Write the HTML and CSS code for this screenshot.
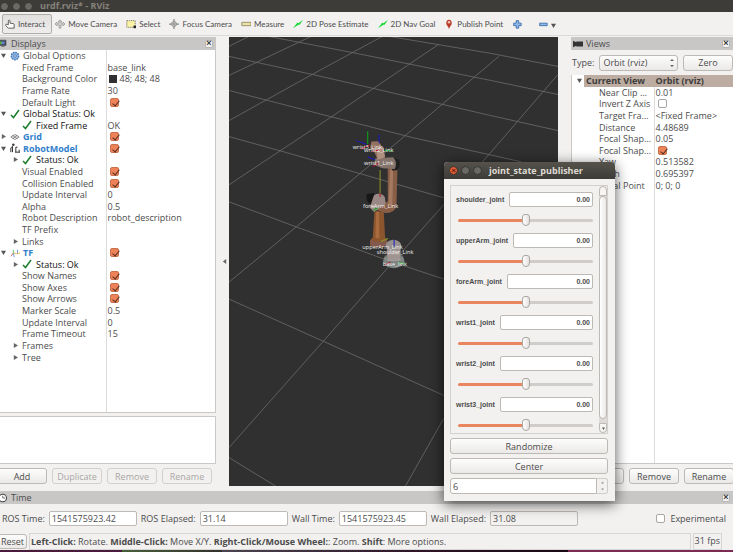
FILE: index.html
```html
<!DOCTYPE html>
<html lang="en">
<head>
<meta charset="utf-8">
<title>urdf.rviz* - RViz</title>
<link rel="stylesheet" href="styles.css">
</head>
<body>
<svg class="defs" aria-hidden="true">
  <symbol id="down" viewBox="0 0 6 6"><path d="M0 1h6L3 6z" fill="#555"/></symbol>
  <symbol id="right" viewBox="0 0 6 6"><path d="M1 0l5 3-5 3z" fill="#666"/></symbol>
  <symbol id="ok" viewBox="0 0 10 10"><path d="M1 6l2.500 2.500L9 1" fill="none" stroke="#1d7d2c" stroke-width="1.500"/></symbol>
  <symbol id="move" viewBox="0 0 12 12"><path d="M6 1l2 2H7v2h3V4l2 2-2 2V7H7v4H5V7H2v1L0 6l2-2v1h3V3H4z" fill="#ddd" stroke="#777" stroke-width=".7"/></symbol>
  <symbol id="target" viewBox="0 0 12 12"><path d="M6 0v12M0 6h12" stroke="#888" stroke-width="1.500"/><circle cx="6" cy="6" r="3" fill="#ccc" stroke="#888"/><path d="M6 4v4M4 6h4" stroke="#888"/></symbol>
  <symbol id="arrow2d" viewBox="0 0 12 10"><path d="M0 10L5 3.500 6.500 4 12 0 8 6 6.500 6z" fill="#18d834"/></symbol>
</svg>

<header class="titlebar">
  <span class="dots"><i></i><i></i><i></i></span>
  <h1>urdf.rviz* - RViz</h1>
</header>

<nav class="toolbar">
  <button class="tool active"><svg viewBox="0 0 12 12"><path d="M4 7V2q1-1.500 2 0v3l4 .5q1 .3 1 1.500V11H4L1 8V6.500q1-1 3 .5z" fill="#fff" stroke="#444"/></svg>Interact</button>
  <button class="tool"><svg><use href="#move"/></svg>Move Camera</button>
  <button class="tool"><svg viewBox="0 0 12 10"><path d="M1 1h10v8H1z" fill="#fbf3a6" stroke="#665" stroke-dasharray="1.500 1"/><path d="M9 7h3v3H9z" fill="#222"/></svg>Select</button>
  <button class="tool"><svg><use href="#target"/></svg>Focus Camera</button>
  <button class="tool"><svg viewBox="0 0 12 12"><path d="M1 4h11v4H1z" fill="#eee2a0" stroke="#8a8460"/></svg>Measure</button>
  <button class="tool"><svg><use href="#arrow2d"/></svg>2D Pose Estimate</button>
  <button class="tool"><svg><use href="#arrow2d"/></svg>2D Nav Goal</button>
  <button class="tool"><svg viewBox="0 0 12 12"><path d="M6 12Q5 9 3 6.500C1-1 11-1 9 6.500Q7 9 6 12z" fill="#b8392a"/><circle cx="6" cy="4" r="1.500" fill="#f4c4b4"/></svg>Publish Point</button>
  <button class="tool" aria-label="Add tool"><svg viewBox="0 0 12 12"><path d="M5 2h3v3h3v3H8v3H5V8H2V5h3z" fill="#8db7e8" stroke="#3467a8"/></svg></button>
  <button class="tool last" aria-label="Remove tool"><svg viewBox="0 0 12 12"><path d="M2 5h9v3H2z" fill="#8db7e8" stroke="#3467a8"/></svg><svg class="tiny"><use href="#down"/></svg></button>
</nav>

<main class="workspace">
  <section class="panel">
    <header class="dock"><svg viewBox="0 0 12 12"><path d="M-2 1H9v8H-2z" fill="#345" stroke="#555"/><path d="M0 3h3v4H0z" fill="#5ab04c"/><path d="M3 3h4v4H3z" fill="#6d7fd0"/><path d="M2 10h5v1H2z" fill="#555"/></svg><h2>Displays</h2><button class="close" aria-label="Close Displays">×</button></header>
    <div class="well grow">
      <table class="tree displays">
        <tr><td><div class="c"><svg class="a"><use href="#down"/></svg><svg class="i" viewBox="0 0 12 12"><circle cx="6" cy="6" r="4.500" fill="#8fb4e0" stroke="#3c72b4" stroke-width="1.500" stroke-dasharray="2 1"/><circle cx="6" cy="6" r="1.500" fill="#fff" stroke="#3c72b4"/></svg>Global Options</div></td><td></td></tr>
        <tr><td><div class="c sub">Fixed Frame</div></td><td>base_link</td></tr>
        <tr><td><div class="c sub">Background Color</div></td><td><span class="swatch"></span>48; 48; 48</td></tr>
        <tr><td><div class="c sub">Frame Rate</div></td><td>30</td></tr>
        <tr><td><div class="c sub"><label for="dl">Default Light</label></div></td><td><input type="checkbox" id="dl" checked></td></tr>
        <tr class="status"><td><div class="c"><svg class="a"><use href="#down"/></svg><svg class="i"><use href="#ok"/></svg>Global Status: Ok</div></td><td></td></tr>
        <tr class="status"><td><div class="c sub"><svg class="i first"><use href="#ok"/></svg>Fixed Frame</div></td><td>OK</td></tr>
        <tr><td><div class="c"><svg class="a"><use href="#right"/></svg><svg class="i" viewBox="0 0 12 12"><path d="M1 6l5-3 5 3-5 3zM3 4l6 4M9 4L3 8" fill="none" stroke="#666" stroke-width=".9"/></svg><label class="name" for="gr">Grid</label></div></td><td><input type="checkbox" id="gr" checked></td></tr>
        <tr><td><div class="c"><svg class="a"><use href="#down"/></svg><svg class="i" viewBox="0 0 12 12"><path d="M1 11V6l2-2v7M3 2h2M7 11V5h2M11 11V8M6 11h6" fill="none" stroke="#333" stroke-width="1.200"/><circle cx="4" cy="2" r="1.500" fill="#444"/></svg><label class="name" for="rm">RobotModel</label></div></td><td><input type="checkbox" id="rm" checked></td></tr>
        <tr class="status"><td><div class="c nest"><svg class="a"><use href="#right"/></svg><svg class="i"><use href="#ok"/></svg>Status: Ok</div></td><td></td></tr>
        <tr><td><div class="c sub"><label for="ve">Visual Enabled</label></div></td><td><input type="checkbox" id="ve" checked></td></tr>
        <tr><td><div class="c sub"><label for="ce">Collision Enabled</label></div></td><td><input type="checkbox" id="ce" checked></td></tr>
        <tr><td><div class="c sub">Update Interval</div></td><td>0</td></tr>
        <tr><td><div class="c sub">Alpha</div></td><td>0.5</td></tr>
        <tr><td><div class="c sub">Robot Description</div></td><td>robot_description</td></tr>
        <tr><td><div class="c sub">TF Prefix</div></td><td></td></tr>
        <tr><td><div class="c nest"><svg class="a"><use href="#right"/></svg><span>Links</span></div></td><td></td></tr>
        <tr><td><div class="c"><svg class="a"><use href="#down"/></svg><svg class="i" viewBox="0 0 12 12"><path d="M1 10l3-4" stroke="#c55"/><path d="M4 6l1 5M9 2v5" stroke="#5a8ad0"/><path d="M4 6l4 1 4-1" stroke="#d8b040" fill="none"/><path d="M4 6V2" stroke="#5b5"/></svg><label class="name" for="tf">TF</label></div></td><td><input type="checkbox" id="tf" checked></td></tr>
        <tr class="status"><td><div class="c nest"><svg class="a"><use href="#right"/></svg><svg class="i"><use href="#ok"/></svg>Status: Ok</div></td><td></td></tr>
        <tr><td><div class="c sub"><label for="sn">Show Names</label></div></td><td><input type="checkbox" id="sn" checked></td></tr>
        <tr><td><div class="c sub"><label for="sa">Show Axes</label></div></td><td><input type="checkbox" id="sa" checked></td></tr>
        <tr><td><div class="c sub"><label for="sw">Show Arrows</label></div></td><td><input type="checkbox" id="sw" checked></td></tr>
        <tr><td><div class="c sub">Marker Scale</div></td><td>0.5</td></tr>
        <tr><td><div class="c sub">Update Interval</div></td><td>0</td></tr>
        <tr><td><div class="c sub">Frame Timeout</div></td><td>15</td></tr>
        <tr><td><div class="c nest"><svg class="a"><use href="#right"/></svg><span>Frames</span></div></td><td></td></tr>
        <tr><td><div class="c nest"><svg class="a"><use href="#right"/></svg><span>Tree</span></div></td><td></td></tr>
      </table>
      <div class="rest"></div>
    </div>
    <div class="well note"></div>
    <div class="actions">
      <button class="btn">Add</button><button class="btn" disabled>Duplicate</button><button class="btn" disabled>Remove</button><button class="btn" disabled>Rename</button>
    </div>
  </section>

  <button class="collapse" aria-label="Collapse panel"><svg viewBox="0 0 6 6"><path d="M5 0L1 3l4 3z" fill="#666"/></svg></button>

  <svg class="view" viewBox="229 37 328 449" preserveAspectRatio="xMidYMid slice" role="img" aria-label="3D view">
    <g fill="none" stroke="#6c6c6c" stroke-width=".8">
      <path d="M388 37L490 54 557 67M268 37L351 53 490 81 557 95M229 57L312 75 373 89 490 116 557 131M229 91L330 117 412 138 520 162M229 137L283 152 353 172 443 198M229 202L296 227 386 260 443 279M229 299L323 341 443 395M229 457L278 487"/>
      <path d="M229 47L249 37M229 76L311 37M229 121L312 75 382 37M229 185L330 118 438 45M229 282L296 227 400 140 498 57M229 447L323 341 387 268 443 205 488 155 557 75M404 487L443 418"/>
    </g>
    <g transform="translate(335 125) scale(.333)">
      <path d="M117 260h28l4 78q10 8 5 20-20 18-48 4-7-14 6-24z" fill="#8b552e"/>
      <path d="M122 260h9l1 80h-12z" fill="#a96b3d"/>
      <path d="M105 345q22 12 49-2v18q-24 12-49 2z" fill="#83594d"/>
      <path d="M157 133q15-14 29-2l-3 112q-4 22-34 22l-25-9 5-22q24 3 28-6z" fill="#895e47"/>
      <path d="M164 135h9l-2 102-12 10z" fill="#a67961"/>
      <path d="M178 101l13 4q6 15-5 31l-15 2-6-30z" fill="#202020"/>
      <path d="M120 101l53-3q14 15 5 35l-37-2-24-10z" fill="#84746b"/>
      <path d="M108 51l22-1 15 25 3 26-21 4-10-22-13-12z" fill="#94705f"/>
      <path d="M123 70l20-5 6 32-22 8z" fill="#b09080"/>
      <path d="M94 208l23-3 4 34-18-2q-13-7-9-29z" fill="#171717"/>
      <path d="M116 211q20-10 32 6l3 21-35 24-13-14z" fill="#9a8884"/>
      <ellipse cx="175" cy="408" rx="32" ry="22" fill="#7d8481"/>
      <path d="M154 365q21-20 42 0l-2 43h-37z" fill="#a09490"/>
      <ellipse cx="174" cy="361" rx="23" ry="16" fill="#96918e"/>
      <ellipse cx="175" cy="397" rx="28" ry="10" fill="none" stroke="#bbb"/>
      <g fill="none" stroke-width="3">
        <path d="M97 20v38M147 77l25 3M114 257l12-8M190 412l19 6" stroke="#0aa914"/>
        <path d="M131 30v26M62 48l31 11M97 97l22 8M176 345v20" stroke="#1818c4"/>
        <path d="M76 73l27-12M110 81l25-6M112 125l18-10M134 205v12M148 420l17-8" stroke="#b4132e"/>
        <path d="M134 136v70M136 350l22-9" stroke="#8d9527"/>
      </g>
      <g class="frames">
        <text x="52" y="74">wrist3_Link</text><text x="86" y="83">wrist2_Link</text><text x="86" y="121">wrist1_Link</text>
        <text x="83" y="249">foreArm_Link</text><text x="81" y="373">upperArm_Link</text><text x="124" y="387">shoulder_Link</text><text x="142" y="422">base_link</text>
      </g>
    </g>
  </svg>

  <section class="panel views">
    <header class="dock"><svg viewBox="0 0 12 12"><path d="M0 2l4 2V3h8v6H4V8l-4 2z" fill="#333"/></svg><h2>Views</h2><button class="close" aria-label="Close Views">×</button></header>
    <div class="type">
      <label for="type">Type:</label>
      <span class="combo"><select id="type"><option>Orbit (rviz)</option></select></span>
      <button class="btn">Zero</button>
    </div>
    <div class="well grow">
      <table class="tree viewprops">
        <tr class="sel"><td><div class="c"><svg class="a"><use href="#down"/></svg><span>Current View</span></div></td><td>Orbit (rviz)</td></tr>
        <tr><td><div class="c sub">Near Clip …</div></td><td>0.01</td></tr>
        <tr><td><div class="c sub"><label for="iz">Invert Z Axis</label></div></td><td><input type="checkbox" id="iz"></td></tr>
        <tr><td><div class="c sub">Target Fra…</div></td><td>&lt;Fixed Frame&gt;</td></tr>
        <tr><td><div class="c sub">Distance</div></td><td>4.48689</td></tr>
        <tr><td><div class="c sub">Focal Shap…</div></td><td>0.05</td></tr>
        <tr><td><div class="c sub"><label for="fs">Focal Shap…</label></div></td><td><input type="checkbox" id="fs" checked></td></tr>
        <tr><td><div class="c sub">Yaw</div></td><td>0.513582</td></tr>
        <tr><td><div class="c sub">Pitch</div></td><td>0.695397</td></tr>
        <tr><td><div class="c sub">Focal Point</div></td><td>0; 0; 0</td></tr>
      </table>
      <div class="rest"></div>
    </div>
    <div class="actions">
      <button class="btn">Save</button><button class="btn">Remove</button><button class="btn">Rename</button>
    </div>
  </section>
</main>

<section class="time">
  <header class="dock"><svg viewBox="0 0 12 12"><circle cx="5" cy="6" r="5" fill="#fff" stroke="#444" stroke-width="1.500"/><path d="M5 3v3h3" fill="none" stroke="#444"/></svg><h2>Time</h2><button class="close" aria-label="Close Time">×</button></header>
  <div class="clocks">
    <label for="rt">ROS Time:</label><input type="text" id="rt" value="1541575923.42">
    <label for="re">ROS Elapsed:</label><input type="text" id="re" value="31.14">
    <label for="wt">Wall Time:</label><input type="text" id="wt" value="1541575923.45">
    <label for="we">Wall Elapsed:</label><input type="text" id="we" class="ro" value="31.08" readonly>
    <span class="exp"><input type="checkbox" id="ex"><label for="ex">Experimental</label></span>
  </div>
</section>

<footer class="statusbar">
  <button class="btn">Reset</button>
  <p><b>Left-Click:</b> Rotate. <b>Middle-Click:</b> Move X/Y. <b>Right-Click/Mouse Wheel:</b>: Zoom. <b>Shift</b>: More options.</p>
  <output>31 fps</output>
</footer>
<div class="desktop"></div>

<section class="dialog" role="dialog" aria-labelledby="jt">
  <header class="titlebar">
    <span class="dots"><i class="x">×</i><i></i><i></i></span>
    <h2 id="jt">joint_state_publisher</h2>
  </header>
  <div class="content">
    <div class="frame">
      <div class="joints">
        <div class="joint"><div class="line"><label for="j1">shoulder_joint</label><input type="text" id="j1" value="0.00"></div><input type="range" aria-label="shoulder_joint"></div>
        <div class="joint"><div class="line"><label for="j2">upperArm_joint</label><input type="text" id="j2" value="0.00"></div><input type="range" aria-label="upperArm_joint"></div>
        <div class="joint"><div class="line"><label for="j3">foreArm_joint</label><input type="text" id="j3" value="0.00"></div><input type="range" aria-label="foreArm_joint"></div>
        <div class="joint"><div class="line"><label for="j4">wrist1_joint</label><input type="text" id="j4" value="0.00"></div><input type="range" aria-label="wrist1_joint"></div>
        <div class="joint"><div class="line"><label for="j5">wrist2_joint</label><input type="text" id="j5" value="0.00"></div><input type="range" aria-label="wrist2_joint"></div>
        <div class="joint"><div class="line"><label for="j6">wrist3_joint</label><input type="text" id="j6" value="0.00"></div><input type="range" aria-label="wrist3_joint"></div>
      </div>
      <div class="scroll"><span class="cap up"></span><span class="thumb"></span><span class="cap"><svg viewBox="0 0 6 6"><use href="#down"/></svg></span></div>
    </div>
    <button class="btn">Randomize</button>
    <button class="btn">Center</button>
    <div class="spin"><input type="text" aria-label="Rows" value="6"><span><svg viewBox="0 0 6 6"><path d="M0 5h6L3 1z" fill="#999"/></svg><svg viewBox="0 0 6 6"><path d="M0 1h6L3 5z" fill="#999"/></svg></span></div>
  </div>
</section>
</body>
</html>
```
FILE: styles.css
```css
* { box-sizing: border-box; }
html, body { height: 100%; margin: 0; }
body {
  display: flex;
  flex-direction: column;
  position: relative;
  overflow: hidden;
  background: #f2f1f0;
  color: #4c4c4c;
  font: 9px/11px "Open Sans", "Noto Sans", sans-serif;
}
button, input, select { font: inherit; color: inherit; margin: 0; padding: 0; }
h1, h2, p { margin: 0; font-size: 9px; font-weight: 400; }
svg { display: block; flex: none; }
.defs { display: none; }

/* window title bars */
.titlebar {
  display: flex;
  align-items: center;
  gap: 7px;
  height: 12px;
  flex: none;
  background: #3d3c38;
}
.titlebar h1 { font-weight: 700; color: #85827b; line-height: 12px; }
.dots { display: flex; gap: 3px; }
.dots i {
  width: 9px;
  height: 9px;
  border-radius: 50%;
  border: 1px solid #35342f;
  background: #6b6963;
  font: 700 8px/7px "Liberation Sans", sans-serif;
  text-align: center;
}
.dots .x { background: #ea5d36; color: #5c1f0d; }

/* toolbar */
.toolbar {
  display: flex;
  align-items: center;
  gap: 9px;
  height: 24px;
  flex: none;
  padding-left: 2px;
  border-bottom: 1px solid #dcdad8;
  font: 8px/10px Lato, sans-serif;
}
.tool { display: flex; align-items: center; gap: 3px; border: 0; background: none; white-space: nowrap; }
.tool svg { width: 10px; height: 10px; }
.tool .tiny { width: 5px; height: 5px; margin-top: 3px; }
.tool.last { margin-left: 7px; }
.tool.active {
  height: 20px;
  padding: 0 6px 0 2px;
  margin-right: -6px;
  border: 1px solid #b0aca8;
  border-radius: 2px;
  background: linear-gradient(#e2e0de, #efedec);
}

/* main area */
.workspace {
  flex: 1;
  min-height: 0;
  display: grid;
  grid-template-columns: 216px 13px 1fr 13px 162px;
  padding: 1px 0 5px;
}
.panel { display: flex; flex-direction: column; min-width: 0; min-height: 0; }
.views { grid-column: 5; }
.view { width: 100%; height: 100%; min-height: 0; background: #303030; }
.frames { fill: #f2f2f2; font: 17px "Open Sans", sans-serif; }
.collapse { border: 0; background: none; display: flex; align-items: center; justify-content: flex-end; padding-right: 2px; }
.collapse svg { width: 5px; height: 5px; }

.dock {
  display: flex;
  align-items: center;
  gap: 3px;
  height: 13px;
  flex: none;
  padding-right: 3px;
  background: #c8c7c6;
}
.dock svg { width: 8px; height: 9px; }
.views .dock { padding-left: 2px; }
.views .dock svg { width: 10px; height: 10px; }
.dock h2 { flex: 1; }
.close {
  width: 8px;
  height: 8px;
  border: 1px solid #b8b6b4;
  border-radius: 2px;
  background: #f4f3f2;
  color: #333;
  font: 700 9px/5px "Liberation Sans", sans-serif;
}

.well { background: #fff; border: 1px solid #cbc9c7; border-left: 0; }
.views .well { border-left: 1px solid #cbc9c7; border-right: 0; }
.grow { flex: 1; min-height: 0; overflow: hidden; display: flex; flex-direction: column; border-top: 0; }
.note { height: 48px; flex: none; margin-top: 3px; }

/* property trees */
.tree { width: 100%; border-collapse: collapse; table-layout: fixed; line-height: 9px; }
.displays { height: 313px; }
.viewprops { height: 116px; }
.tree td { padding: 0 0 0 1px; white-space: nowrap; overflow: hidden; vertical-align: middle; }
.tree td:first-child { width: 106px; padding: 0; border-right: 1px solid #dedcda; }
.viewprops td:first-child { width: 82px; }
.rest { flex: 1; width: 107px; border-right: 1px solid #dedcda; }
.views .rest { width: 83px; }
.c { display: flex; align-items: center; height: 11px; padding-left: 1px; }
.c.sub { padding-left: 22px; }
.c.nest { padding-left: 13px; }
.a { width: 5px; height: 5px; margin-right: 4px; }
.i { width: 10px; height: 10px; margin-right: 3px; }
.sub .i, .nest .i { margin-right: 4px; }
.status { color: #111; }
.status td:last-child { color: #4c4c4c; }
.name { color: #2f7ecb; font-weight: 700; }
.swatch { display: inline-block; width: 8px; height: 8px; margin: 0 3px 0 1px; background: #303030; vertical-align: -1px; }
.viewprops .c { padding-left: 5px; }
.viewprops .c.sub { padding-left: 27px; }
.sel td { background: #bcaca1; font-weight: 700; color: #3c3c3c; }
.sel td:first-child { background: linear-gradient(90deg, #fff 12px, #bcaca1 12px); border-color: #bcaca1; }

input[type=checkbox] {
  appearance: none;
  display: block;
  flex: none;
  position: relative;
  width: 9px;
  height: 9px;
  border: 1px solid #aaa6a2;
  border-radius: 2px;
  background: #fff;
}
td input[type=checkbox] { margin-left: 2px; }
input[type=checkbox]:checked { border-color: #c9704c; background: #ee8259; }
input[type=checkbox]:checked::after {
  content: "";
  position: absolute;
  left: 3px;
  top: 0;
  width: 3px;
  height: 6px;
  border: solid #57301f;
  border-width: 0 1px 1px 0;
  transform: rotate(40deg);
}

/* buttons and fields */
.btn {
  height: 16px;
  border: 1px solid #bdb9b5;
  border-radius: 3px;
  background: linear-gradient(#fdfdfd, #ebe9e7);
  text-align: center;
}
.btn:disabled { color: #a9a6a3; border-color: #d2cfcc; background: #f2f1f0; }
.actions { display: grid; grid-template-columns: repeat(4, 50px); gap: 5px; margin: 4px 0 2px -3px; }
.views .actions { grid-template-columns: repeat(3, 50px); justify-content: end; margin-right: -1px; }
.type { display: flex; align-items: center; gap: 5px; height: 25px; flex: none; padding-left: 1px; }
.type .btn { width: 50px; flex: none; }
.combo { flex: 1; min-width: 0; position: relative; }
.combo select {
  display: block;
  appearance: none;
  width: 100%;
  height: 16px;
  padding-left: 3px;
  border: 1px solid #bdb9b5;
  border-radius: 3px;
  background: linear-gradient(#fdfdfd, #ebe9e7);
}
.combo::before, .combo::after {
  content: "";
  position: absolute;
  right: 4px;
  top: 4px;
  border: 2px solid transparent;
  border-bottom-color: #666;
  border-top-width: 0;
}
.combo::after { top: 10px; border-width: 2px 2px 0; border-top-color: #666; }
input[type=text] {
  min-width: 0;
  height: 15px;
  padding: 0 2px;
  border: 1px solid #bdb9b5;
  border-radius: 2px;
  background: #fff;
}

/* time panel */
.time { flex: none; }
.time .dock svg { width: 9px; height: 10px; margin-left: -1px; }
.clocks { display: flex; align-items: center; gap: 4px; height: 28px; padding: 0 7px 0 2px; }
.clocks input[type=text] { width: 88px; flex: 0 1 auto; }
.clocks .ro { background: #f2f1f0; }
.clocks label { white-space: nowrap; }
.exp { display: flex; align-items: center; gap: 5px; margin-left: auto; }

/* status bar */
.statusbar { display: flex; align-items: center; gap: 2px; height: 18px; flex: none; padding-right: 11px; }
.statusbar .btn { width: 29px; height: 15px; margin: 0 0 0 -2px; }
.statusbar p { flex: 1; height: 17px; padding: 2px 1px; border: 1px solid #d8d6d4; white-space: nowrap; overflow: hidden; }
.statusbar output { height: 17px; padding: 1px; border: 1px solid #d8d6d4; }
.desktop { height: 2px; flex: none; background: linear-gradient(90deg, #4a1a3c 122px, #47603a 122px, #33302c 222px, #4b4450 222px, #2d1426 420px, #1a0914 568px, #7b2b51 568px); }

/* joint dialog */
.dialog {
  position: absolute;
  left: 444px;
  top: 162px;
  width: 171px;
  background: #f2f1f0;
  border-radius: 4px 4px 0 0;
  box-shadow: 0 3px 14px #000a;
}
.dialog .titlebar { height: 17px; padding-left: 5px; border-radius: 4px 4px 0 0; background: linear-gradient(#55524b, #3d3c38); }
.dialog .titlebar h2 { color: #dfdbd2; font-weight: 700; }
.content { display: flex; flex-direction: column; gap: 4px; padding: 6px 7px 7px 6px; }
.frame { display: flex; border: 1px solid #d3d0cd; height: 249px; padding-left: 5px; }
.joints { flex: 1; min-width: 0; padding-top: 6px; }
.joint { height: 41px; font: 700 7px/9px "Liberation Sans", sans-serif; }
.line { display: flex; align-items: center; gap: 5px; }
.line input { flex: 1; text-align: right; }
.frame .scroll { width: 8px; margin-left: 6px; display: flex; flex-direction: column; background: #dddbd8; border-radius: 4px; }
.cap { height: 10px; flex: none; border: 1px solid #bdb9b5; border-radius: 0 0 4px 4px; background: #f6f5f4; display: grid; place-items: center; }
.cap svg { width: 3px; height: 3px; }
.cap.up { border-radius: 4px 4px 0 0; }
.thumb { flex: 1; margin-bottom: 4px; border: 1px solid #bdb9b5; border-radius: 4px; background: linear-gradient(90deg, #fff, #eae8e6); }
input[type=range] { appearance: none; display: block; width: calc(100% - 2px); height: 12px; margin: 7px 0 0 2px; background: none; }
input[type=range]::-webkit-slider-runnable-track {
  height: 3px;
  border-radius: 2px;
  background: linear-gradient(90deg, #e98660 50%, #cfccc9 50%);
}
input[type=range]::-webkit-slider-thumb {
  appearance: none;
  width: 8px;
  height: 12px;
  margin-top: -5px;
  border: 1px solid #aaa6a2;
  border-radius: 3px 3px 4px 4px;
  background: linear-gradient(90deg, #fff, #e4e2e0);
}
.spin { display: flex; }
.spin input { flex: 1; height: 16px; border-radius: 3px 0 0 3px; }
.spin span { width: 11px; display: flex; flex-direction: column; align-items: center; justify-content: space-around; border: 1px solid #cfccc9; border-left: 0; border-radius: 0 3px 3px 0; }
.spin svg { width: 3px; height: 3px; }
```
